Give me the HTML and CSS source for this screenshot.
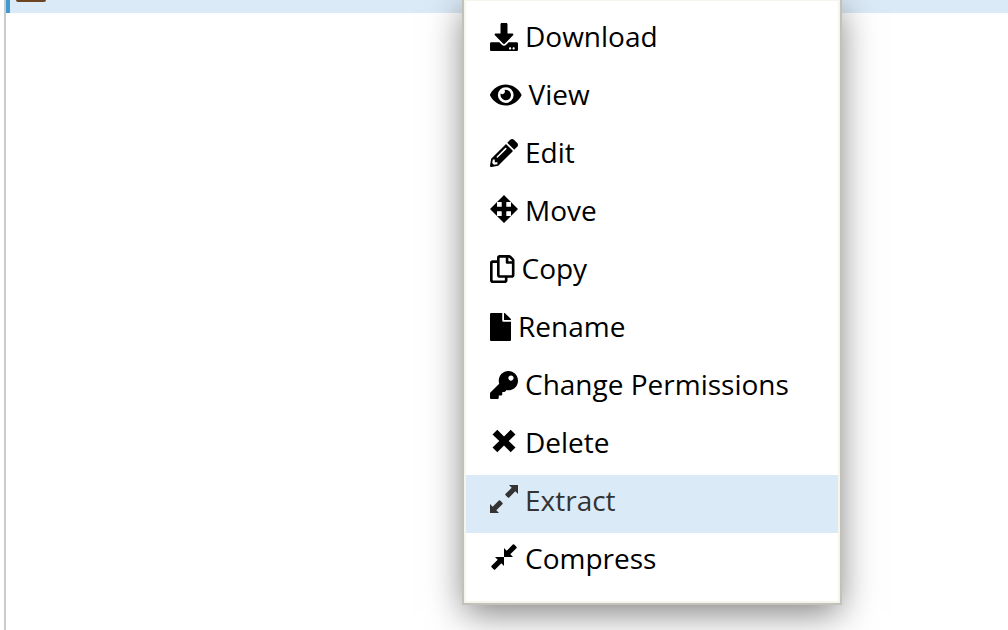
FILE: index.html
```html
<!DOCTYPE html>
<html lang="en">
<head>
<meta charset="utf-8">
<title>File Manager</title>
<link rel="stylesheet" href="styles.css">
</head>
<body>
<main class="files">
  <div class="file-row"><span class="file-icon"></span></div>
</main>
<menu class="context-menu">
  <li><button class="item" type="button"><svg class="icon" viewBox="0 0 512 512"><path d="M216 0h80c13.300 0 24 10.700 24 24v168h87.700c17.800 0 26.700 21.500 14.100 34.100L269.700 378.300c-7.500 7.500-19.800 7.500-27.300 0L90.100 226.100c-12.600-12.600-3.700-34.100 14.100-34.100H192V24c0-13.300 10.700-24 24-24zm296 376v112c0 13.300-10.700 24-24 24H24c-13.300 0-24-10.700-24-24V376c0-13.300 10.700-24 24-24h146.700l49 49c20.100 20.100 52.500 20.100 72.600 0l49-49H488c13.300 0 24 10.700 24 24zm-124 88c0-11-9-20-20-20s-20 9-20 20 9 20 20 20 20-9 20-20zm64 0c0-11-9-20-20-20s-20 9-20 20 9 20 20 20 20-9 20-20z"/></svg>Download</button></li>
  <li><button class="item" type="button"><svg class="icon" viewBox="0 0 576 512"><path d="M572.520 241.400C518.290 135.590 410.930 64 288 64S57.680 135.640 3.480 241.410a32.350 32.350 0 0 0 0 29.190C57.710 376.410 165.070 448 288 448s230.320-71.640 284.520-177.410a32.350 32.350 0 0 0 0-29.190zM288 400a144 144 0 1 1 144-144 143.930 143.930 0 0 1-144 144zm0-240a95.310 95.310 0 0 0-25.310 3.790 47.850 47.850 0 0 1-66.900 66.900A95.780 95.780 0 1 0 288 160z"/></svg>View</button></li>
  <li><button class="item" type="button"><svg class="icon" viewBox="0 0 512 512"><path d="M497.900 142.100l-46.100 46.100c-4.700 4.700-12.300 4.700-17 0l-111-111c-4.700-4.700-4.700-12.300 0-17l46.100-46.100c18.700-18.700 49.100-18.700 67.900 0l60.100 60.100c18.800 18.700 18.800 49.100 0 67.900zM284.200 99.800L21.600 362.400.4 483.900c-2.900 16.400 11.400 30.600 27.800 27.800l121.500-21.300 262.600-262.600c4.700-4.700 4.700-12.300 0-17l-111-111c-4.800-4.700-12.400-4.700-17.100 0zM124.100 339.900c-5.500-5.500-5.500-14.300 0-19.800l154-154c5.500-5.500 14.300-5.500 19.800 0s5.500 14.300 0 19.800l-154 154c-5.500 5.500-14.300 5.500-19.800 0zM88 424h48v36.300l-64.500 11.300-31.100-31.100L51.700 376H88v48z"/></svg>Edit</button></li>
  <li><button class="item" type="button"><svg class="icon icon-raised" viewBox="0 0 28 28"><path d="M14 0l7 7h-4.700v4.700H21V7l7 7-7 7v-4.700h-4.700V21H21l-7 7-7-7h4.700v-4.700H7V21l-7-7 7-7v4.700h4.700V7H7z"/></svg>Move</button></li>
  <li><button class="item" type="button"><svg class="icon" viewBox="0 0 448 512"><path d="M433.941 65.941l-51.882-51.882A48 48 0 0 0 348.118 0H176c-26.510 0-48 21.490-48 48v48H48c-26.510 0-48 21.490-48 48v320c0 26.510 21.490 48 48 48h224c26.510 0 48-21.490 48-48v-48h80c26.510 0 48-21.490 48-48V99.882a48 48 0 0 0-14.059-33.941zM266 464H54a6 6 0 0 1-6-6V150a6 6 0 0 1 6-6h74v224c0 26.510 21.490 48 48 48h96v42a6 6 0 0 1-6 6zm128-96H182a6 6 0 0 1-6-6V54a6 6 0 0 1 6-6h106v88c0 13.255 10.745 24 24 24h88v202a6 6 0 0 1-6 6zm6-256h-64V48h9.632c1.591 0 3.117.632 4.243 1.757l48.368 48.368a6 6 0 0 1 1.757 4.243V112z"/></svg>Copy</button></li>
  <li><button class="item" type="button"><svg class="icon" viewBox="0 0 384 512"><path d="M224 136V0H24C10.700 0 0 10.700 0 24v464c0 13.300 10.700 24 24 24h336c13.300 0 24-10.700 24-24V160H248c-13.200 0-24-10.800-24-24zm160-14.100v6.100H256V0h6.100c6.400 0 12.500 2.500 17 7l97.900 98c4.500 4.500 7 10.600 7 16.900z"/></svg>Rename</button></li>
  <li><button class="item" type="button"><svg class="icon" viewBox="0 0 512 512"><path d="M512 176C512 273.200 433.200 352 336 352c-11.200 0-22.200-1.100-32.800-3.100l-24 27A24 24 0 0 1 261.200 384H224v40c0 13.300-10.700 24-24 24h-40v40c0 13.300-10.700 24-24 24H24c-13.300 0-24-10.700-24-24v-78.100c0-6.300 2.500-12.400 7-16.900l161.800-161.800C163.100 213.800 160 195.300 160 176 160 78.800 238.800 0 336 0s176 78.500 176 176zM336 128c0 26.500 21.500 48 48 48s48-21.500 48-48-21.500-48-48-48-48 21.500-48 48z"/></svg>Change Permissions</button></li>
  <li><button class="item" type="button"><svg class="icon icon-raised" viewBox="0 0 28 28"><path d="M7.300 2.800L14 9.500l6.700-6.700 4.800 4.700-6.800 6.500 6.800 6.500-4.800 4.700-6.700-6.700-6.700 6.700-4.800-4.700L9.300 14 2.500 7.500z"/></svg>Delete</button></li>
  <li><button class="item item-active" type="button"><svg class="icon icon-raised" viewBox="0 0 28 28"><path d="M19 0h9v9l-2.700-2.700-6.100 6.100q-.7.700-1.400 0l-2.200-2.200q-.7-.7 0-1.400l6.100-6.100zM9 28H0v-9l2.700 2.700 6.100-6.100q.7-.7 1.400 0l2.200 2.200q.7.700 0 1.400l-6.100 6.100z"/></svg>Extract</button></li>
  <li><button class="item" type="button"><svg class="icon icon-raised" viewBox="0 0 28 28"><path d="M14 14V5l2.700 2.700 6.100-6.100q.7-.7 1.400 0l2.200 2.200q.7.700 0 1.400l-6.100 6.100L23 14zM14 14v9l-2.700-2.700-6.100 6.100q-.7.700-1.400 0l-2.200-2.200q-.7-.7 0-1.400l6.100-6.100L5 14z"/></svg>Compress</button></li>
</menu>
</body>
</html>
```
FILE: styles.css
```css
* {
  box-sizing: border-box;
}

body {
  margin: 0;
  min-height: 100vh;
  overflow: hidden;
  background: #fff;
  font-family: "Open Sans", sans-serif;
}

.files {
  min-height: 100vh;
  margin-left: 4px;
  border-left: 2px solid #ccc;
}

.file-row {
  height: 13px;
  padding-left: 6px;
  border-left: 4px solid #4399d3;
  background: #dbeaf7;
}

.file-icon {
  display: block;
  width: 30px;
  height: 2px;
  border-radius: 0 0 3px 3px;
  background: #6b4521;
}

/* Floats over the file list */
.context-menu {
  position: absolute;
  top: -1px;
  left: 464px;
  width: 376px;
  margin: 0;
  padding: 10px 0;
  border: 2px solid #f5f5eb;
  background: #fff;
  list-style: none;
  box-shadow: 0 0 0 2px #c2c2bb, 0 10px 34px rgba(0, 0, 0, 0.5);
}

.item {
  display: flex;
  align-items: center;
  gap: 7px;
  width: 100%;
  height: 58px;
  padding: 0 24px 8px;
  border: 0;
  background: transparent;
  color: #000;
  font: inherit;
  font-size: 28px;
  line-height: 50px;
  text-align: left;
  white-space: nowrap;
}

.item-active {
  background: #dbeaf7;
  color: #333;
}

.icon {
  flex: none;
  height: 28px;
  margin-top: 1px;
  fill: currentColor;
}

.icon-raised {
  margin-top: 0;
  margin-bottom: 2px;
}
```
